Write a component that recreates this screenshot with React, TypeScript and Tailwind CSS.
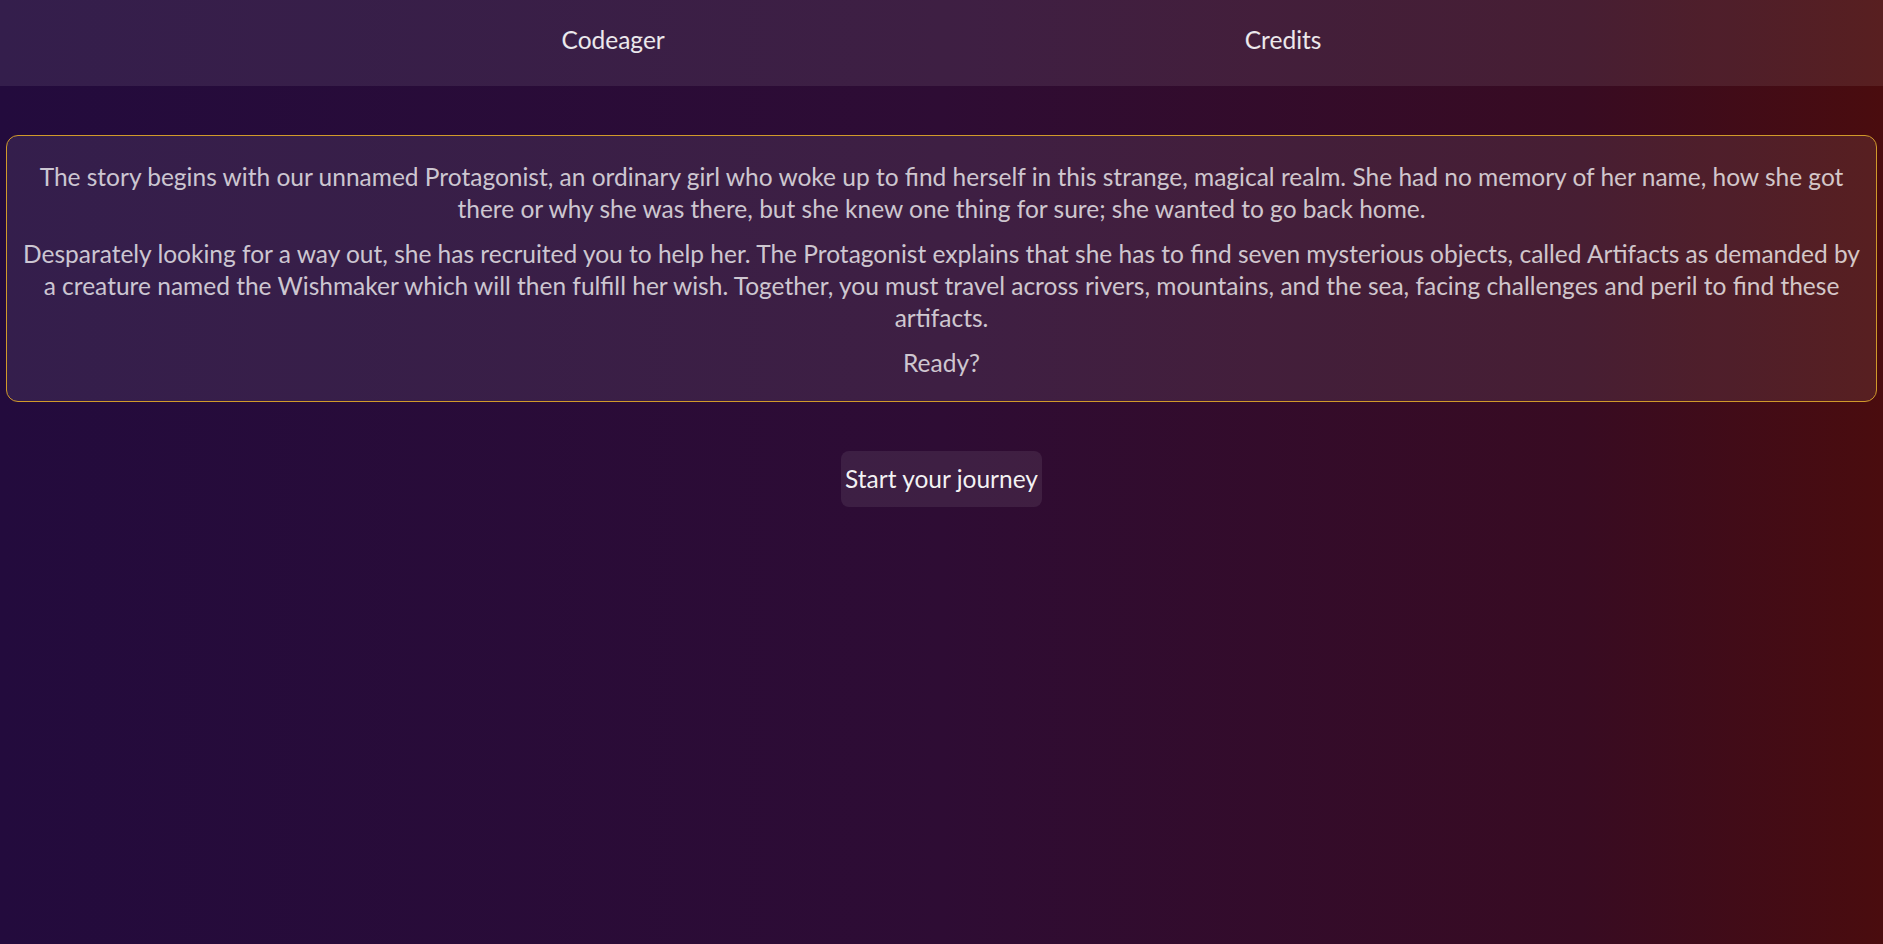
import React from "react";

export default function App() {
  return (
    <div
      className="min-h-screen w-full bg-[linear-gradient(to_right,#230b3d_0%,#2e0c34_50%,#380b22_84%,#4a0c0e_100%)] text-white"
      style={{ fontFamily: "Lato, 'Noto Sans', sans-serif" }}
    >
      {/* Top bar */}
      <header className="h-[86px] bg-white/[0.08]">
        <nav className="mx-auto flex h-full w-[1340px] items-center justify-around pb-[5px] text-[24.5px] text-white/90">
          <a href="#">Codeager</a>
          <a href="#">Credits</a>
        </nav>
      </header>

      {/* Story */}
      <main className="flex flex-col items-center px-[6px] pt-[49px]">
        <section className="w-full rounded-xl border border-[#d19a2a] bg-white/[0.08] px-3 pt-[25px] pb-[22px] text-center text-[24.5px] leading-8 text-white/75">
          <p>
            The story begins with our unnamed Protagonist, an ordinary girl who woke up to find herself in this
            strange, magical realm. She had no memory of her name, how she got there or why she was there, but she
            knew one thing for sure; she wanted to go back home.
          </p>
          <p className="mt-[13px]">
            Desparately looking for a way out, she has recruited you to help her. The Protagonist explains that she
            has to find seven mysterious objects, called Artifacts as demanded by a creature named the Wishmaker
            which will then fulfill her wish. Together, you must travel across rivers, mountains, and the sea,
            facing challenges and peril to find these artifacts.
          </p>
          <p className="mt-[13px]">Ready?</p>
        </section>

        <button className="mt-[49px] h-[56px] rounded-lg bg-white/[0.08] px-1 text-[24.5px] text-white/95">
          Start your journey
        </button>
      </main>
    </div>
  );
}
